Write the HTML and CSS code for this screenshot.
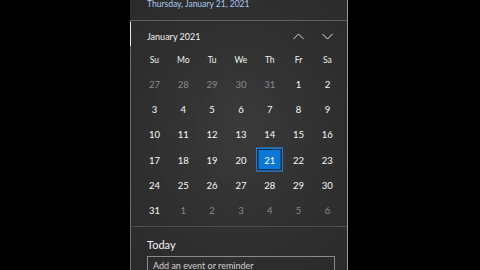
FILE: index.html
```html
<!DOCTYPE html>
<html>
<head>
<meta charset="utf-8">
<link rel="stylesheet" href="styles.css">
</head>
<body>
<div class="panel">
  <div class="datebar">Thursday, January 21, 2021</div>
  <div class="main">
    <div class="monthbar">
      <span class="month">January 2021</span>
      <span class="navs">
        <span class="nav"><svg width="11" height="7" viewBox="0 0 11 7"><polyline points="0.5,6 5.5,1 10.5,6" fill="none" stroke="#e0e0e0" stroke-width="1"/></svg></span>
        <span class="nav"><svg width="11" height="7" viewBox="0 0 11 7"><polyline points="0.5,1 5.5,6 10.5,1" fill="none" stroke="#e0e0e0" stroke-width="1"/></svg></span>
      </span>
    </div>
    <div class="grid">
      <span class="dow">Su</span><span class="dow">Mo</span><span class="dow">Tu</span><span class="dow">We</span><span class="dow">Th</span><span class="dow">Fr</span><span class="dow">Sa</span>
      <span class="d other">27</span><span class="d other">28</span><span class="d other">29</span><span class="d other">30</span><span class="d other">31</span><span class="d">1</span><span class="d">2</span>
      <span class="d">3</span><span class="d">4</span><span class="d">5</span><span class="d">6</span><span class="d">7</span><span class="d">8</span><span class="d">9</span>
      <span class="d">10</span><span class="d">11</span><span class="d">12</span><span class="d">13</span><span class="d">14</span><span class="d">15</span><span class="d">16</span>
      <span class="d">17</span><span class="d">18</span><span class="d">19</span><span class="d">20</span><span class="d today"><span class="sel">21</span></span><span class="d">22</span><span class="d">23</span>
      <span class="d">24</span><span class="d">25</span><span class="d">26</span><span class="d">27</span><span class="d">28</span><span class="d">29</span><span class="d">30</span>
      <span class="d">31</span><span class="d other">1</span><span class="d other">2</span><span class="d other">3</span><span class="d other">4</span><span class="d other">5</span><span class="d other">6</span>
    </div>
    <div class="agenda">
      <div class="today-title">Today</div>
      <div class="input">Add an event or reminder</div>
    </div>
  </div>
</div>
</body>
</html>
```
FILE: styles.css
```css
html, body {
  margin: 0;
  padding: 0;
}
body {
  width: 480px;
  height: 270px;
  overflow: hidden;
  background: #000;
  padding-left: 130px;
  box-sizing: border-box;
  font-family: "Lato", "Noto Sans", sans-serif;
}
.panel {
  width: 218px;
  height: 270px;
  box-sizing: border-box;
  border-right: 1px solid #9a9a9a;
  background: radial-gradient(ellipse 160px 200px at 110px 130px, #3a3a3a 0%, #2f2f2f 60%, #2a2a2a 100%);
  display: flex;
  flex-direction: column;
  overflow: hidden;
}
.datebar {
  height: 21px;
  box-sizing: border-box;
  border-bottom: 1px solid #5e5e5e;
  padding-left: 17px;
  font-size: 8.5px;
  line-height: 9px;
  color: #a7c9f2;
  flex: none;
}
.main {
  flex: 1;
  border-left: 1px solid #6e6e6e;
  position: relative;
  display: flex;
  flex-direction: column;
}
.main::before {
  content: "";
  position: absolute;
  left: -1px;
  top: 1px;
  width: 1px;
  height: 24px;
  background: #e8e8e8;
}
.monthbar {
  height: 30px;
  display: flex;
  align-items: center;
  padding-left: 16px;
  padding-right: 5px;
  color: #f2f2f2;
  font-size: 9px;
}
.navs {
  margin-left: auto;
  display: flex;
}
.nav {
  width: 29px;
  display: flex;
  justify-content: center;
  align-items: center;
}
.grid {
  margin-left: 9px;
  margin-top: 1px;
  display: grid;
  grid-template-columns: repeat(7, 28.83px);
  grid-template-rows: 18px repeat(6, 25.2px);
}
.dow {
  display: flex;
  align-items: center;
  justify-content: center;
  font-size: 8.5px;
  color: #f0f0f0;
  transform: translateY(-1px);
}
.d {
  display: flex;
  align-items: center;
  justify-content: center;
  font-size: 9.5px;
  color: #fafafa;
  transform: translateY(1.5px);
}
.d.other {
  color: #8a8a8a;
}
.sel {
  width: 27px;
  height: 24px;
  box-sizing: border-box;
  display: flex;
  align-items: center;
  justify-content: center;
  background: #0a78d7;
  border: 1px solid #3775b5;
  box-shadow: inset 0 0 0 1.5px #122f52;
  color: #fff;
}
.agenda {
  margin-top: 5px;
  border-top: 1px solid #4e4e4e;
  padding-left: 16px;
  flex: 1;
}
.today-title {
  font-size: 11px;
  color: #f4f4f4;
  margin-top: 11px;
  line-height: 14px;
}
.input {
  margin-top: 4px;
  width: 188px;
  height: 20px;
  box-sizing: border-box;
  border: 1px solid #8a8a8a;
  padding-left: 5px;
  font-size: 9px;
  line-height: 18px;
  color: #cfcfcf;
}
```
